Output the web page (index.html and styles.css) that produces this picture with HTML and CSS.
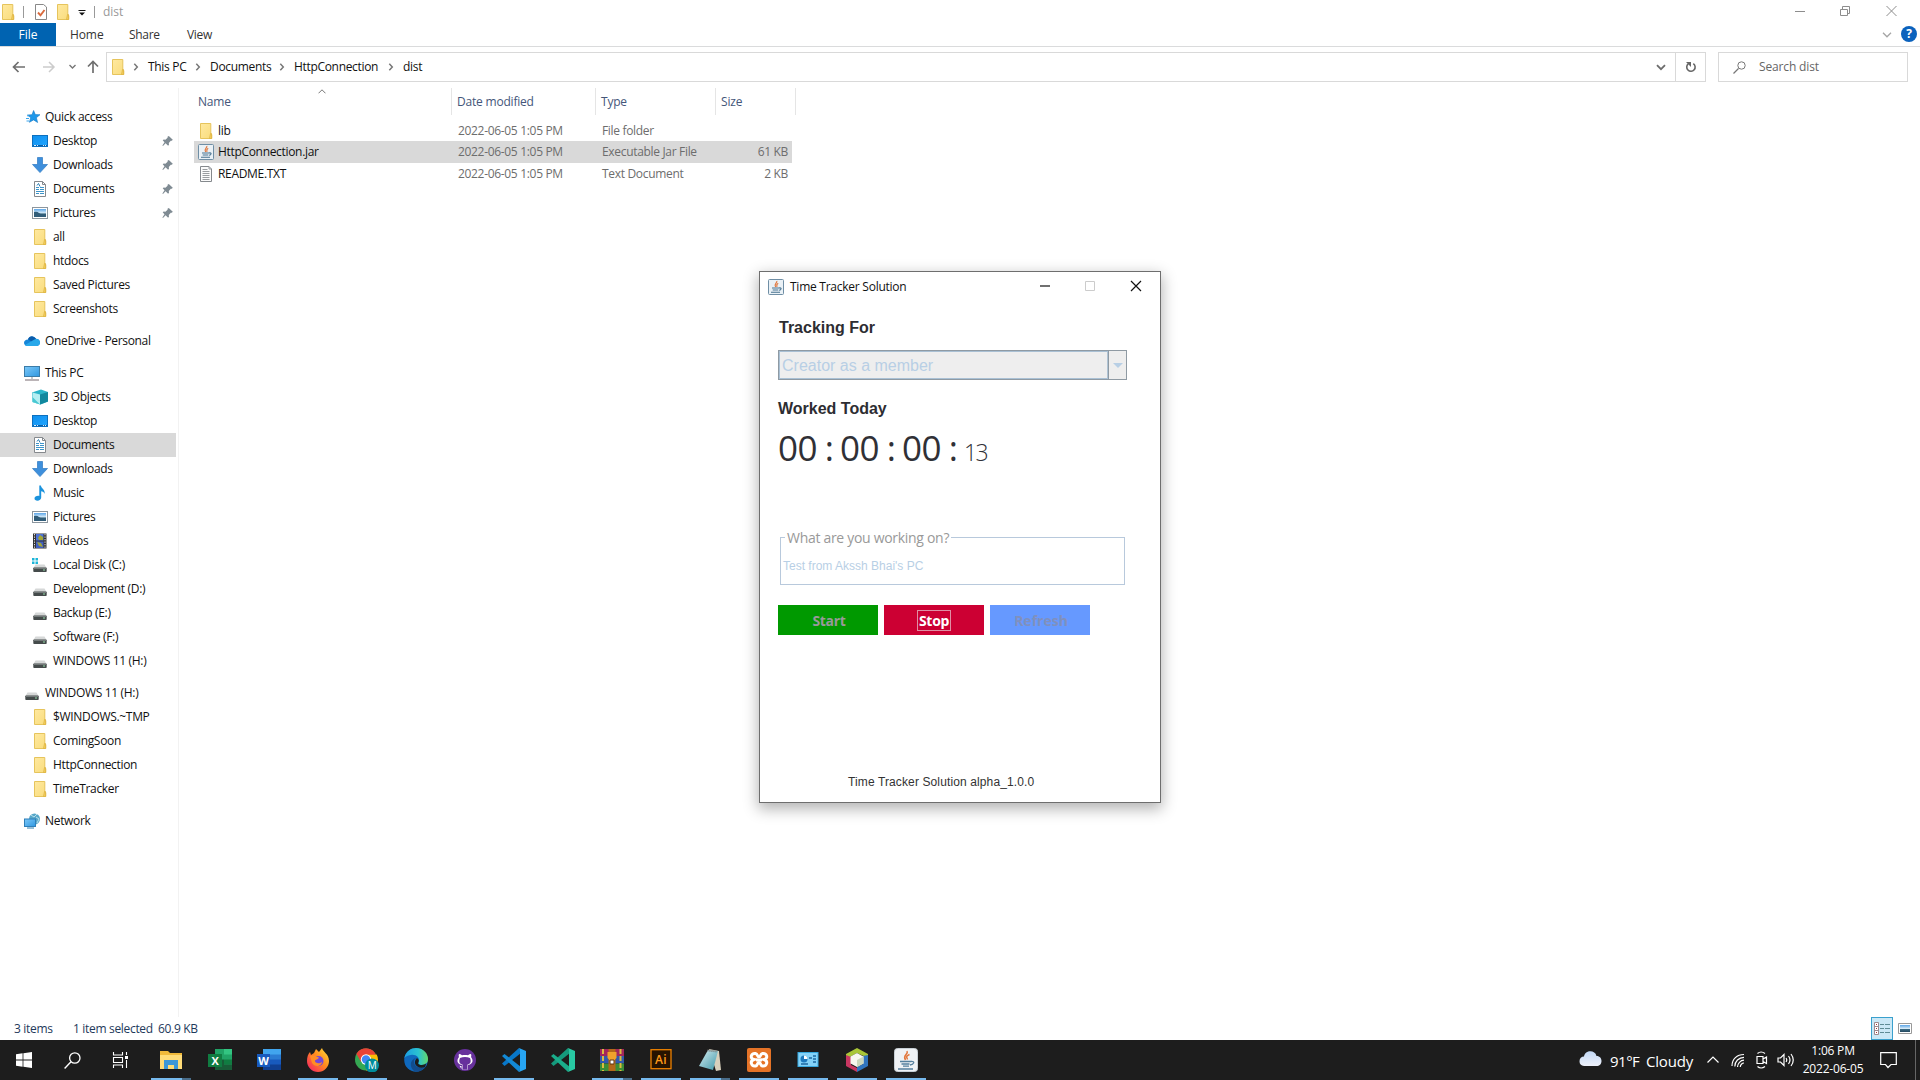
FILE: index.html
```html
<!DOCTYPE html>
<html lang="en">
<head>
<meta charset="utf-8">
<title>dist</title>
<link rel="stylesheet" href="styles.css">
</head>
<body>
<svg class="defs" width="0" height="0" aria-hidden="true">
  <defs>
    <linearGradient id="gFolder" x1="0" y1="0" x2="1" y2="1"><stop offset="0" stop-color="#ffe9a0"/><stop offset="1" stop-color="#f9dc7c"/></linearGradient>
    <linearGradient id="gBlue" x1="0" y1="0" x2="1" y2="1"><stop offset="0" stop-color="#0e8fee"/><stop offset="1" stop-color="#22a6ff"/></linearGradient>
    <linearGradient id="gScreen" x1="0" y1="0" x2="1" y2="1"><stop offset="0" stop-color="#7cc8f8"/><stop offset="1" stop-color="#2f97e0"/></linearGradient>
    <linearGradient id="gCloud" x1="0" y1="0" x2="0" y2="1"><stop offset="0" stop-color="#c3d9f6"/><stop offset="1" stop-color="#eef1fa"/></linearGradient>
    <linearGradient id="gSky" x1="0" y1="0" x2="0" y2="1"><stop offset="0" stop-color="#5ba5e8"/><stop offset=".5" stop-color="#d7ebf8"/><stop offset=".6" stop-color="#3d6c85"/><stop offset="1" stop-color="#24485e"/></linearGradient>
    <linearGradient id="gFox" x1="1" y1="0" x2="0" y2="1"><stop offset="0" stop-color="#ffe23a"/><stop offset=".45" stop-color="#ff8a1e"/><stop offset="1" stop-color="#f5156c"/></linearGradient>
    <linearGradient id="gEdge" x1="0" y1="0" x2="1" y2="0"><stop offset="0" stop-color="#1b9de2"/><stop offset=".6" stop-color="#2bc3d0"/><stop offset="1" stop-color="#63d86a"/></linearGradient>
    <linearGradient id="gNote" x1="0" y1="0" x2="1" y2="1"><stop offset="0" stop-color="#d5eef2"/><stop offset="1" stop-color="#3f97a8"/></linearGradient>
    <symbol id="folder" viewBox="0 0 16 16"><path d="M2.5.5h10.300v11h1v4h-11.300z" fill="url(#gFolder)" stroke="#e6c45c"/><path d="M12.500 10.500h1v5h-2z" fill="#f4cf5f" stroke="#dcb23d" stroke-width=".7"/></symbol>
    <symbol id="star" viewBox="0 0 16 16"><path d="M8.600 1.500l1.700 4.100 4.700.1-3.600 3 1.200 4.800-4-2.600-4.200 2.400 1.300-4.600L2.500 6l4.500-.3z" fill="#1f98ea" stroke="#1479c4" stroke-width=".6"/><path d="M1 9.500h3M1.500 12h2.500M2 6.800h2" stroke="#3aa6ee"/></symbol>
    <symbol id="desktop" viewBox="0 0 16 16"><rect x=".5" y="2.500" width="15" height="11" fill="url(#gBlue)" stroke="#0c70bf"/><path d="M1 12.500h14" stroke="#0b5da6"/><path d="M2 12.500h2m1 0h1m5 0h1m1 0h1" stroke="#d7efff"/></symbol>
    <symbol id="download" viewBox="0 0 16 16"><path d="M5.500.5h5v7h5L8 15.600.500 7.500h5z" fill="#3e8fdc" stroke="#2c79c2" stroke-width=".7"/></symbol>
    <symbol id="document" viewBox="0 0 16 16"><path d="M2.500.5h8l3 3v12h-11z" fill="#fff" stroke="#85898d"/><path d="M10.500.5v3h3" fill="none" stroke="#85898d"/><path d="M4 6.500h3M8 6.500h4M4 8.500h3M8 8.500h4M4 10.500h8M4 12.500h3M8 12.500h4" stroke="#3d94c9"/><path d="M5 4.500l1.500-2 1.500 3" fill="none" stroke="#2d7fb5"/></symbol>
    <symbol id="picture" viewBox="0 0 16 16"><rect x=".5" y="2.500" width="15" height="11" fill="#fff" stroke="#8c969e"/><rect x="2" y="4" width="12" height="8" fill="url(#gSky)"/><path d="M2 7q3-1 5 1t7 1v3H2z" fill="#315d79"/></symbol>
    <symbol id="onedrive" viewBox="0 0 16 16"><path d="M4 6.500C5 3 9.500 2 12 5.800c2.500 0 4 1.700 4 3.700 0 2-1.500 3.500-3.500 3.500H3.500C1.400 13 0 11.600 0 9.800 0 8 1.600 6.500 4 6.500z" fill="#1686d9"/><path d="M4 6.300C5.200 2.600 9.500 2 12 5.800L8 9z" fill="#0a5cab"/><path d="M1 12l9-5.200c3-2 6 .2 6 2.900 0 1.800-1.500 3.300-3.500 3.300H3.500c-1 0-2-.4-2.500-1z" fill="#28a8ea"/></symbol>
    <symbol id="pc" viewBox="0 0 16 16"><rect x=".5" y="1.500" width="15" height="10" fill="url(#gScreen)" stroke="#3b7ca8"/><path d="M7 12h2v2H7z" fill="#c5c9cc"/><path d="M1 15h14" stroke="#8d8287" stroke-width="1.200"/></symbol>
    <symbol id="cube" viewBox="0 0 16 16"><path d="M0 3.500L9 .5l7 2.500v9.500L8.500 15.500.500 13z" fill="#2bb5c9"/><path d="M8 5.500v10L.5 13V3.500z" fill="#b4eef2"/><path d="M.5 8L8 15.500.5 13z" fill="#48c8d2"/><path d="M8 5.500L16 3v9.500l-8 3z" fill="#12889e"/></symbol>
    <symbol id="music" viewBox="0 0 16 16"><path d="M7.300.5h1.600c.2 3 4.600 4 3.700 8.500-.5-1.800-2-2.500-3.400-2.700v6.200c0 1.900-1.700 3.200-3.800 3.200-1.700 0-2.900-.8-2.900-2.200 0-1.900 2.400-3.100 4.800-2.600z" fill="#1b93dd"/></symbol>
    <symbol id="video" viewBox="0 0 16 16"><path d="M1 .5h13.500v15H1z" fill="#333"/><rect x="4" y="1" width="7.500" height="6.500" fill="#4d72d6"/><rect x="4" y="8.500" width="7.500" height="6.500" fill="#4260c4"/><path d="M6 5l2-3 3 2v3H7zM5 9l4 1 2 4-4-1z" fill="#a2a437"/><path d="M2.500 1v14.500M13 1v14.500" stroke="#ddd" stroke-dasharray="1.300 1.200"/></symbol>
    <symbol id="drive" viewBox="0 0 16 16"><path d="M3.500 7.500h9l2 3.500h-13z" fill="#d6d8d8"/><rect x="1.300" y="10.500" width="13.400" height="4.500" rx=".8" fill="#454b4b"/><path d="M2 11.500h12" stroke="#737979"/><circle cx="12" cy="13" r=".8" fill="#9ff0b4"/></symbol>
    <symbol id="cdrive" viewBox="0 0 16 16"><use href="#drive"/><path d="M0 1h2.500v2.500H0zM3.500 1H6v2.500H3.500zM0 4.500h2.500V7H0zM3.500 4.500H6V7H3.500z" fill="#1db5d8"/></symbol>
    <symbol id="network" viewBox="0 0 16 16"><circle cx="10.500" cy="6" r="5.500" fill="#57a7c8"/><path d="M7 2l3 2 3-3M12 4l3 2-2 4" fill="none" stroke="#b8dfec"/><rect x=".5" y="6" width="11" height="7.500" fill="url(#gScreen)" stroke="#2f7fb8"/><path d="M3 15h7" stroke="#3080b0"/></symbol>
    <symbol id="pin" viewBox="0 0 12 12"><path d="M6.800 1l4 3.700-1 1-1 .1-2 2.300.2 1.600-.9 1L3.600 8.200 1 11l-.6-.4L2.500 7.200.7 5.300l1-.8 1.700.2 2.200-2-.1-.9z" fill="#7f8b93"/></symbol>
    <symbol id="java" viewBox="0 0 16 16"><rect x=".5" y=".5" width="15" height="15" rx="1" fill="#eaf1f6" stroke="#6f8ea5"/><path d="M8.800 2C9.500 4 5.500 5 7.600 8M10.200 4.300C8 5.500 8.600 6.300 9 7.800" fill="none" stroke="#e2763b" stroke-width="1.200"/><path d="M4 9h7M4.700 11h5.600M3 13.200h9M11 9c3-.8 2.500 2 0 2.300" fill="none" stroke="#47728f" stroke-width="1.100"/></symbol>
    <symbol id="text" viewBox="0 0 16 16"><path d="M2.500.5h8.500l2.500 2.500v12.500h-11z" fill="#fbfbfb" stroke="#85898d"/><path d="M11 .5V3h2.500M4.500 3.500h5M4.500 5.500h7M4.500 7.500h7M4.500 9.500h7M4.500 11.500h7M4.500 13.500h7" fill="none" stroke="#9a9da0"/></symbol>
    <symbol id="crumb" viewBox="0 0 6 8"><path d="M1.300.8l3 3.200-3 3.200" fill="none" stroke="#777" stroke-width="1.500"/></symbol>
    <symbol id="vs" viewBox="0 0 24 24"><path d="M17 0l7 3v18l-7 3L5.500 13.500 2.200 16.200.300 15V9l1.900-1.200L17 20V4L2.200 16.500.300 15 17 0z" /></symbol>
  </defs>
</svg>

<div class="explorer">
  <header class="titlebar">
    <svg class="i16 q1"><use href="#folder"/></svg><i class="bar b1"></i>
    <svg class="i16 q2" viewBox="0 0 16 16"><path d="M2.500.5h8l3 2.500v12.500h-11z" fill="#fff" stroke="#888"/><path d="M5 8.500l2.500 2.800L11.500 6" fill="none" stroke="#d96a3d" stroke-width="1.900"/></svg>
    <svg class="i16 q3"><use href="#folder"/></svg>
    <svg class="q4" width="8" height="6" viewBox="0 0 8 6"><path d="M.5.500h7" stroke="#111"/><path d="M1 2.500h6L4 5.500z" fill="#111"/></svg>
    <i class="bar b2"></i><span class="title">dist</span>
    <svg class="winctl" width="112" height="12" viewBox="0 0 112 12"><g fill="none" stroke="#8d8d8d"><path d="M1 6.500h10M46.500 4.500h7v6h-7zM48.500 4v-2.500h7v7H54M92.500 1l10 10M102.500 1l-10 10"/></g></svg>
  </header>
  <nav class="tabs">
    <span class="tab file">File</span><span class="tab home">Home</span><span class="tab share">Share</span><span class="tab view">View</span>
    <svg class="collapse" width="10" height="6" viewBox="0 0 10 6"><path d="M1 .8l4 4 4-4" fill="none" stroke="#a5a5a5" stroke-width="1.300"/></svg>
    <span class="help">?</span>
  </nav>
  <div class="addressrow">
    <svg class="arrows" width="88" height="16" viewBox="0 0 88 16"><g fill="none"><path d="M13 8h12M18.500 3l-5 5 5 5" stroke="#6f6f6f" stroke-width="1.700"/><path d="M43 8h11M49 3l5 5-5 5" stroke="#ccc" stroke-width="1.500"/><path d="M69.500 6l3 3 3-3" stroke="#777" stroke-width="1.400"/></g></svg>
    <svg class="up" width="12" height="14" viewBox="0 0 12 14"><path d="M6 13V2M1 6.500L6 1.500l5 5" fill="none" stroke="#6f6f6f" stroke-width="1.700"/></svg>
    <div class="address">
      <svg class="i16 afold"><use href="#folder"/></svg>
      <svg class="chev"><use href="#crumb"/></svg><span class="c1">This PC</span>
      <svg class="chev"><use href="#crumb"/></svg><span class="c2">Documents</span>
      <svg class="chev"><use href="#crumb"/></svg><span class="c3">HttpConnection</span>
      <svg class="chev"><use href="#crumb"/></svg><span class="c4">dist</span>
      <svg class="drop" width="10" height="7" viewBox="0 0 10 7"><path d="M1 1.200l4 4 4-4" fill="none" stroke="#6d6d6d" stroke-width="1.800"/></svg>
      <span class="refresh"><svg width="12" height="13" viewBox="0 0 12 13"><path d="M8.300 2.600a4.200 4.200 0 1 1-5 .2" fill="none" stroke="#666" stroke-width="1.600"/><path d="M1 1h5v5z" fill="#666"/></svg></span>
    </div>
    <div class="search"><svg width="13" height="13" viewBox="0 0 13 13"><path d="M.500 12.500l5-5" stroke="#777" stroke-width="1.200"/><circle cx="8.500" cy="4.500" r="3.700" fill="none" stroke="#777"/></svg><span>Search dist</span></div>
  </div>
  <div class="body">
    <aside class="tree">
      <div class="n root star"><svg class="i16"><use href="#star"/></svg><span>Quick access</span></div>
      <div class="n"><svg class="i16"><use href="#desktop"/></svg><span>Desktop</span><svg class="pin"><use href="#pin"/></svg></div>
      <div class="n"><svg class="i16"><use href="#download"/></svg><span>Downloads</span><svg class="pin"><use href="#pin"/></svg></div>
      <div class="n"><svg class="i16"><use href="#document"/></svg><span>Documents</span><svg class="pin"><use href="#pin"/></svg></div>
      <div class="n"><svg class="i16"><use href="#picture"/></svg><span>Pictures</span><svg class="pin"><use href="#pin"/></svg></div>
      <div class="n"><svg class="i16"><use href="#folder"/></svg><span>all</span></div>
      <div class="n"><svg class="i16"><use href="#folder"/></svg><span>htdocs</span></div>
      <div class="n"><svg class="i16"><use href="#folder"/></svg><span>Saved Pictures</span></div>
      <div class="n"><svg class="i16"><use href="#folder"/></svg><span>Screenshots</span></div>
      <div class="n root"><svg class="i16"><use href="#onedrive"/></svg><span>OneDrive - Personal</span></div>
      <div class="n root"><svg class="i16"><use href="#pc"/></svg><span>This PC</span></div>
      <div class="n"><svg class="i16"><use href="#cube"/></svg><span>3D Objects</span></div>
      <div class="n"><svg class="i16"><use href="#desktop"/></svg><span>Desktop</span></div>
      <div class="n selected"><svg class="i16"><use href="#document"/></svg><span>Documents</span></div>
      <div class="n"><svg class="i16"><use href="#download"/></svg><span>Downloads</span></div>
      <div class="n"><svg class="i16"><use href="#music"/></svg><span>Music</span></div>
      <div class="n"><svg class="i16"><use href="#picture"/></svg><span>Pictures</span></div>
      <div class="n"><svg class="i16"><use href="#video"/></svg><span>Videos</span></div>
      <div class="n"><svg class="i16"><use href="#cdrive"/></svg><span>Local Disk (C:)</span></div>
      <div class="n"><svg class="i16"><use href="#drive"/></svg><span>Development (D:)</span></div>
      <div class="n"><svg class="i16"><use href="#drive"/></svg><span>Backup (E:)</span></div>
      <div class="n"><svg class="i16"><use href="#drive"/></svg><span>Software (F:)</span></div>
      <div class="n"><svg class="i16"><use href="#drive"/></svg><span>WINDOWS 11 (H:)</span></div>
      <div class="n root"><svg class="i16"><use href="#drive"/></svg><span>WINDOWS 11 (H:)</span></div>
      <div class="n"><svg class="i16"><use href="#folder"/></svg><span>$WINDOWS.~TMP</span></div>
      <div class="n"><svg class="i16"><use href="#folder"/></svg><span>ComingSoon</span></div>
      <div class="n"><svg class="i16"><use href="#folder"/></svg><span>HttpConnection</span></div>
      <div class="n"><svg class="i16"><use href="#folder"/></svg><span>TimeTracker</span></div>
      <div class="n root"><svg class="i16"><use href="#network"/></svg><span>Network</span></div>
    </aside>
    <main class="list">
      <div class="head">
        <span>Name<svg class="sort" width="8" height="5" viewBox="0 0 8 5"><path d="M.500 4.300L4 .8l3.500 3.500" fill="none" stroke="#777"/></svg></span><span>Date modified</span><span>Type</span><span>Size</span>
      </div>
      <div class="row"><span class="name"><svg class="i16"><use href="#folder"/></svg>lib</span><span>2022-06-05 1:05 PM</span><span>File folder</span><span class="size"></span></div>
      <div class="row on"><span class="name"><svg class="i16"><use href="#java"/></svg>HttpConnection.jar</span><span>2022-06-05 1:05 PM</span><span>Executable Jar File</span><span class="size">61 KB</span></div>
      <div class="row"><span class="name"><svg class="i16"><use href="#text"/></svg>README.TXT</span><span>2022-06-05 1:05 PM</span><span>Text Document</span><span class="size">2 KB</span></div>
    </main>
  </div>
  <footer class="status">
    <span class="s1">3 items</span><span class="s2">1 item selected</span><span class="s3">60.9 KB</span>
    <div class="views">
      <span class="details"><svg width="16" height="14" viewBox="0 0 16 14"><path d="M.5.500h4v12h-4zM.500 4.500h4M.500 8.500h4" fill="#fff" stroke="#9c8a90"/><path d="M6 2.500h4m1 0h5M6 6.500h4m1 0h5M6 10.500h4m1 0h5" stroke="#5f8c96"/><path d="M2 2.500h1M2 6.500h1M2 10.500h1" stroke="#a33"/></svg></span>
      <svg width="14" height="11" viewBox="0 0 14 11"><path d="M.5.500h13v10H.500z" fill="#fff" stroke="#999"/><path d="M2 2h10v7H2z" fill="url(#gSky)"/></svg>
    </div>
  </footer>
</div>

<section class="dialog">
  <header class="dtitle"><svg class="i16"><use href="#java"/></svg><span>Time Tracker Solution</span>
    <svg class="dctl" width="104" height="12" viewBox="0 0 104 12"><g fill="none"><path d="M1 6h10" stroke="#111" stroke-width="1.200"/><path d="M46.500 1.500h9v9h-9z" stroke="#ccc"/><path d="M92 1l10 10M102 1L92 11" stroke="#111" stroke-width="1.200"/></g></svg>
  </header>
  <h2 class="h1">Tracking For</h2>
  <div class="combo"><span class="value">Creator as a member</span><span class="arrow"></span></div>
  <h2 class="h2">Worked Today</h2>
  <div class="timer"><span>00</span><b>:</b><span>00</span><b>:</b><span>00</span><b>:</b><em>13</em></div>
  <fieldset class="task"><legend>What are you working on?</legend><span>Test from Akssh Bhai's PC</span></fieldset>
  <div class="buttons"><span class="btn start">Start</span><span class="btn stop"><span class="focus">Stop</span></span><span class="btn refreshbtn">Refresh</span></div>
  <p class="version">Time Tracker Solution alpha_1.0.0</p>
</section>

<footer class="taskbar">
  <span class="t"><svg width="16" height="16" viewBox="0 0 16 16"><path d="M0 2.200L6.600 1.300v6.300H0zM7.400 1.200L16 0v7.600H7.400zM0 8.400h6.600v6.300L0 13.800zM7.400 8.400H16V16l-8.600-1.200z" fill="#fff"/></svg></span>
  <span class="t"><svg width="17" height="17" viewBox="0 0 17 17"><circle cx="10.800" cy="6" r="5.200" fill="none" stroke="#fff" stroke-width="1.300"/><path d="M.600 16.400L7 9.800" stroke="#fff" stroke-width="1.400"/></svg></span>
  <span class="t"><svg width="17" height="16" viewBox="0 0 17 16"><path d="M1.500 0v3h9V0M1.500 16v-3h9v3M1.500 5.500h9v5h-9zM14.500 0v3M14.500 8v8" fill="none" stroke="#fff" stroke-width="1.100"/><path d="M13 4h3v3h-3z" fill="#fff"/></svg></span>
  <span class="t app open multi"><svg width="24" height="24" viewBox="0 0 24 24"><path d="M1 3h8l2 2h12v15H1z" fill="#f0b93a"/><path d="M1 7h22v14H1z" fill="#ffdc78"/><path d="M5 12h14v9h-4v-4H9v4H5z" fill="#3d97d7"/></svg></span>
  <span class="t app"><svg width="24" height="24" viewBox="0 0 24 24"><path d="M7 1h17v21H7z" fill="#21a366"/><path d="M16 1h8v5.500h-8z" fill="#33c481"/><path d="M7 11.500h9v10.500H7z" fill="#185c37"/><path d="M16 11.500h8v5h-8z" fill="#107c41"/><path d="M16 16.500h8V22h-8z" fill="#185c37"/><path d="M0 6h14v13H0z" fill="#107c41"/><text x="7" y="16.500" text-anchor="middle" class="lettr">X</text></svg></span>
  <span class="t app"><svg width="24" height="24" viewBox="0 0 24 24"><path d="M6 1h18v6H6z" fill="#41a5ee"/><path d="M6 6.500h18V12H6z" fill="#2b7cd3"/><path d="M6 11.500h18V17H6z" fill="#185abd"/><path d="M6 16.500h18V22H6z" fill="#103f91"/><path d="M0 6h13v13H0z" fill="#185abd"/><text x="6.500" y="16.500" text-anchor="middle" class="lettr">W</text></svg></span>
  <span class="t app open"><svg width="24" height="24" viewBox="0 0 24 24"><path d="M4 4l1 3 3-2 2-4 3 3 3-4c1 4 7 6 7 13a11 11 0 0 1-22 0c0-4 1-7 3-9z" fill="url(#gFox)"/><circle cx="12.500" cy="13" r="5" fill="#7147d8"/><path d="M4 8c4-2 6 1 9 1.500-1 2.500-4 1.500-4 3.500s4 3.500 7 1c0 4-7 6-10 1z" fill="#ff8d24"/></svg></span>
  <span class="t app open"><svg width="24" height="24" viewBox="0 0 24 24"><circle cx="11" cy="11.500" r="11" fill="#35a853"/><path d="M1.500 6A11 11 0 0 1 20.500 6L11 12z" fill="#e94235"/><path d="M11 6.500h10.700A11 11 0 0 1 11 22.500l5-8z" fill="#fbbc05"/><path d="M1.500 6L6 14l5-7.500h9.800A11 11 0 0 0 1.500 6z" fill="#e94235"/><circle cx="11" cy="11.500" r="5.200" fill="#fff"/><circle cx="11" cy="11.500" r="4.200" fill="#4285f4"/><circle cx="17" cy="17.500" r="7" fill="#008c9b"/><text x="17" y="21" text-anchor="middle" class="mlet">M</text></svg></span>
  <span class="t app"><svg width="24" height="24" viewBox="0 0 24 24"><circle cx="12" cy="12" r="11.800" fill="#0f68bd"/><path d="M.300 10C2 3 7 0 12 0c8 0 12 6 12 11 0 4-3 6-6.500 6-2.500 0-4-1-3-2.500C17 10 12 6.500 8 6.800 4 7 1.500 9 .300 10z" fill="url(#gEdge)"/><path d="M13 9.500c-3 1-4 4.500-2 7.500 2 2.800 7 3.800 10.500 1.500-2 3.500-6 5.300-9.500 5.300-6-2-8-12 1-14.300z" fill="#124c8d"/><path d="M14.500 14c-1 2 .5 3 3 3 2 0 3.500-.5 4.800-1.700L21 19c-4 2-9 0-10-3.500-.5-2 .5-4 2-5.500 1 1 2.500 2 1.500 4z" fill="#1d1d1d"/></svg></span>
  <span class="t app"><svg width="24" height="24" viewBox="0 0 24 24"><circle cx="12" cy="12" r="11" fill="#67319c"/><path d="M8.500 21v-3c-2 .3-2.500-1-3-1.800M9 21.500V17c-6-1-5-6-3-8-.5-1-.3-2 0-3 1 0 2 .5 3 1.300 2-.5 4-.5 6 0 1-.8 2-1.300 3-1.300.3 1 .5 2 0 3 2 2 3 7-3 8v4.500z" fill="#fff"/><path d="M9.500 21.500v-5c-3-.5-4-3-2.500-6.500 3-1.500 7-1.500 10 0 1.500 3.500.5 6-2.500 6.500v5z" fill="#67319c"/></svg></span>
  <span class="t app open"><svg width="24" height="24" viewBox="0 0 24 24"><path d="M17 0L0 15.500 2.500 18 19 5z" fill="#0877c9"/><path d="M0 8l2.500-2L19 19l-2 5z" fill="#1389d5"/><path d="M17 0l7 3v18l-7 3 1-3V3z" fill="#27a5f3"/></svg></span>
  <span class="t app"><svg width="24" height="24" viewBox="0 0 24 24"><path d="M17 0L0 15.500 2.500 18 19 5z" fill="#159a7d"/><path d="M0 8l2.500-2L19 19l-2 5z" fill="#1aad8b"/><path d="M17 0l7 3v18l-7 3 1-3V3z" fill="#28c9a3"/></svg></span>
  <span class="t app open multi"><svg width="24" height="24" viewBox="0 0 24 24"><path d="M0 1h24v7H0z" fill="#a3265b"/><path d="M0 8h24v7.500H0z" fill="#3158ad"/><path d="M0 15.500h24V23H0z" fill="#3c8d36"/><path d="M3 1v22M20.500 1v22" stroke="#dabb40" stroke-width="2" stroke-dasharray="5 2"/><path d="M8.500 1h7v22h-7z" fill="#b56719"/><path d="M7.500 4h9v6l-2 2v4h-5v-4l-2-2z" fill="#f0a12c"/><path d="M10 12h4v4h-4z" fill="#fff" stroke="#5e3513"/></svg></span>
  <span class="t app open"><svg width="24" height="24" viewBox="0 0 24 24"><rect x="2" y="1.700" width="20" height="19" fill="#261300" stroke="#ef8200" stroke-width="1.300"/><text x="12" y="16" text-anchor="middle" class="ai">Ai</text></svg></span>
  <span class="t app open multi"><svg width="24" height="24" viewBox="0 0 24 24"><path d="M11 1l10 2 2 19-5 1z" fill="#d8d0bc"/><path d="M10 2l10 1-5 19-14-4z" fill="url(#gNote)"/><path d="M9.500 2.500l10 1" stroke="#777" stroke-width="2" stroke-dasharray="1 1"/></svg></span>
  <span class="t app open"><svg width="24" height="24" viewBox="0 0 24 24"><rect width="24" height="24" rx="2" fill="#e57327"/><path d="M8.500 5.500C4 5 2.500 10.500 7 11.500 2.500 13 4 18.500 8.500 18c2.500-.5 1.500-3.500 3.500-3.500s1 3 3.500 3.500c4.500.5 6-5 1.500-6.500 4.500-1 3-6.500-1.500-6C13 6 14 9 12 9s-1-3-3.500-3.500z" fill="none" stroke="#fff" stroke-width="3"/><path d="M9 12h6" stroke="#fff" stroke-width="3"/></svg></span>
  <span class="t app open"><svg width="24" height="24" viewBox="0 0 24 24"><rect x="2" y="4.500" width="20" height="14" fill="#83d2f8" stroke="#36a8df"/><circle cx="8" cy="11" r="3.500" fill="#1c79bd"/><path d="M8 11V7.500A3.500 3.500 0 0 1 11.500 11z" fill="#fff"/><path d="M13 10h3m1-2h3m-3 3h3m-3 3h3m-15 2h7" stroke="#1d68a0" stroke-width="1.500"/></svg></span>
  <span class="t app open"><svg width="24" height="24" viewBox="0 0 24 24"><path d="M12 0l11 6v4L12 5 3 10v8L1 17V6z" fill="#a9c637"/><path d="M1 7l5 2v8l6 3v4L1 18z" fill="#c83661"/><path d="M23 7v11l-11 6v-5l6-3V8z" fill="#2f74bd"/><path d="M12 5l6.500 3.500v7L12 19l-6.500-3.500v-7z" fill="#f7f7ef"/><path d="M12 12l6.500-3.500v7L12 19z" fill="#cbd7bc"/></svg></span>
  <span class="t app open"><svg width="24" height="24" viewBox="0 0 24 24"><rect x=".5" y=".5" width="23" height="23" rx="3" fill="#eff2f5" stroke="#c8d0d6"/><path d="M13 3c2 3.500-5 4-1.500 9M15.500 6.500C11 8.500 13 9.500 13.500 11.500" fill="none" stroke="#e2763b" stroke-width="1.500"/><path d="M6 13.500h11M7.500 16h8M9 18.200h6M4 21h15M17 13.500c4.500-.5 3 3-1 3.500" fill="none" stroke="#55809e" stroke-width="1.300"/></svg></span>
  <div class="tray">
    <svg class="cloud" width="23" height="16" viewBox="0 0 23 16"><path d="M5 5.500C6-1 16-1.500 17.500 5 21 5 22.500 7.500 22.500 10c0 3-2 5-5 5H5C2 15 .500 13 .500 10.300.500 7.500 2.500 5.500 5 5.500z" fill="url(#gCloud)"/></svg>
    <span class="temp">91°F</span><span class="sky">Cloudy</span>
    <svg class="trayicons" width="90" height="22" viewBox="0 0 90 22"><g fill="none" stroke="#fff" stroke-width="1.200"><path d="M1.500 13.500L7 8l5.500 5.500"/><path d="M26 17C26 10 31 5.500 38 5.500M28.800 17.500c0-5 4-9.200 9.200-9.200M31.500 18c0-3.500 3-6.800 6.500-6.800M34.300 18c0-2 1.700-4 3.700-4"/><path d="M51 7.500h6v7h-6zM57 10l3.500-2v6.500L57 12.500M51.500 4.500q3.500-3 7.500 0M51.500 17.500q3.500 3 7.500 0"/><path d="M72 9h2.500L78 5.500v11L74.500 13H72zM80 9q1.500 2 0 4M82.500 7q3 4 0 8M85 5q4.500 6 0 12"/></g></svg>
    <span class="clock"><span>1:06 PM</span><span>2022-06-05</span></span>
    <svg class="note" width="17" height="17" viewBox="0 0 17 17"><path d="M.700.700h15.600v11.800H11L8 15.500l-2.500-3H.700z" fill="none" stroke="#fff" stroke-width="1.200"/></svg>
    <i class="peek"></i>
  </div>
</footer>
</body>
</html>
```
FILE: styles.css
```css
* { box-sizing: border-box; }
body { margin: 0; width: 1920px; height: 1080px; overflow: hidden; position: relative; display: flex; flex-direction: column; background: #fff; color: #111; font: 12px/16px "Open Sans", "Noto Sans", sans-serif; letter-spacing: -.32px; }
span { white-space: nowrap; }
svg { display: block; flex: none; }
.defs { position: absolute; }
.i16 { width: 16px; height: 16px; }
.explorer { height: 1040px; display: flex; flex-direction: column; }

.titlebar { height: 23px; display: flex; align-items: center; }
.q1 { margin-left: 0; }
.bar { width: 1px; height: 12px; background: #999; }
.b1 { margin-left: 7px; }
.q2 { margin-left: 9px; }
.q3 { margin-left: 6px; }
.q4 { margin: 3px 0 0 7px; }
.b2 { margin-left: 8px; }
.title { margin-left: 8px; color: #999; letter-spacing: 0; }
.winctl { margin: -2px 14px 0 auto; }

.tabs { height: 24px; border-bottom: 1px solid #dadbdc; display: flex; color: #333; }
.tab { height: 23px; line-height: 23px; }
.file { width: 56px; background: #0063b1; color: #fff; text-align: center; letter-spacing: 0; }
.home { margin-left: 14px; width: 59px; letter-spacing: -.1px; }
.share { width: 58px; }
.view { width: 50px; }
.collapse { margin: 9px 9px 0 auto; }
.help { width: 16px; height: 16px; margin: 3px 3px 0 0; border-radius: 50%; background: #0b62bd; color: #fff; font-weight: 700; text-align: center; }

.addressrow { height: 41px; display: flex; align-items: flex-start; padding-top: 5px; }
.arrows { margin-top: 7px; }
.up { margin-top: 8px; margin-right: 6px; margin-left: -1px; }
.address { width: 1600px; margin-left: 1px; height: 30px; border: 1px solid #d9d9d9; display: flex; align-items: center; }
.afold { margin: -1px 7px 0 3px; }
.address .chev { width: 6px; height: 8px; margin-right: 9px; }
.c1 { width: 47px; }
.c2 { width: 69px; }
.c3 { width: 94px; }
.address .c1, .address .c2, .address .c3 { margin-right: 0; }
.drop { margin-left: auto; margin-right: 9px; }
.refresh { width: 30px; height: 28px; border-left: 1px solid #d9d9d9; display: flex; align-items: center; justify-content: center; }
.search { width: 190px; height: 30px; margin-left: 12px; border: 1px solid #d9d9d9; display: flex; align-items: center; color: #666; padding-left: 14px; gap: 13px; letter-spacing: -.15px; }

.body { flex: 1; display: flex; min-height: 0; }
.tree { width: 179px; border-right: 1px solid #f2f2f2; padding-top: 17px; }
.n { height: 24px; width: 176px; padding-left: 32px; display: flex; align-items: center; gap: 5px; }
.n.root { padding-left: 24px; margin-top: 8px; }
.n.star { margin-top: 0; gap: 4px; padding-left: 25px; }
.n.selected { background: #d9d9d9; }
.pin { width: 12px; height: 12px; margin: 0 2px 0 auto; }
.list { width: 617px; padding-left: 15px; }
.head { height: 32px; display: grid; grid-template-columns: 258px 144px 120px 80px; color: #44567a; }
.head span { position: relative; height: 27px; padding: 6px 0 0 6px; border-right: 1px solid #e5e5e5; line-height: 16px; margin-left: -1px; letter-spacing: -.2px; }
.head span:first-child { padding-left: 4px; margin-left: 0; }
.sort { position: absolute; left: 124px; top: 1px; }
.row { width: 598px; height: 21px; display: grid; grid-template-columns: 257px 144px 120px 77px; align-items: center; color: #6d6d6d; padding-left: 0; line-height: 20px; }
.row > span { padding-left: 7px; }
.row.on { height: 22px; background: #d9d9d9; }
.row .name { display: flex; align-items: center; gap: 4px; padding-left: 4px; color: #111; }
.row .size { text-align: right; padding-right: 4px; }

.status { height: 23px; display: flex; align-items: center; color: #1e395b; }
.s1 { margin-left: 14px; width: 59px; }
.s2 { width: 85px; }
.views { margin-left: auto; display: flex; align-items: center; gap: 5px; margin-right: 8px; }
.details { width: 22px; height: 23px; border: 1px solid #3aa0cd; background: #cbe8f6; display: flex; align-items: center; justify-content: center; }

.dialog { position: absolute; left: 759px; top: 271px; width: 402px; height: 532px; border: 1px solid #6e6e6e; background: #fff; box-shadow: 0 5px 14px 1px rgba(0,0,0,.3); display: flex; flex-direction: column; color: #333; }
.dtitle { height: 30px; display: flex; align-items: center; padding-left: 8px; gap: 6px; color: #111; letter-spacing: -.25px; }
.dctl { margin: -2px 17px 0 auto; }
h2 { font: bold 16px/20px "Liberation Sans", Arial, sans-serif; letter-spacing: 0; margin: 0; color: #2d2d32; }
.h1 { margin: 16px 0 0 19px; }
.combo { margin: 12px 0 0 18px; width: 349px; height: 30px; display: flex; font: 16px/27px "Liberation Sans", Arial, sans-serif; letter-spacing: 0; color: #b8cfe5; background: #eee; border: 1px solid #8f9aa3; }
.value { width: 329px; border: 1px solid #a9c0d4; border-right-color: #b0c4d5; padding-left: 2px; }
.arrow { flex: 1; border-left: 1px solid #8f9aa3; display: flex; align-items: center; justify-content: center; }
.arrow::before { content: ""; border: 5px solid transparent; border-top: 5px solid #b8cfe5; border-bottom: 0; }
.h2 { margin: 19px 0 0 18px; }
.timer { height: 50px; margin-left: 18px; display: flex; align-items: baseline; font-size: 35px; line-height: 58px; color: #303036; letter-spacing: -.6px; }
.timer span { width: 40px; }
.timer b { width: 22px; text-align: center; font-weight: 400; }
.timer em { font-style: normal; font-weight: 300; font-size: 23px; letter-spacing: -1.700px; }
.task { margin: 60px 0 0 20px; width: 345px; height: 56px; border: 1px solid #b8c9dc; padding: 12px 0 0 2px; color: #b8cfe5; font: 12px/16px "Liberation Sans", Arial, sans-serif; letter-spacing: 0; }
.task legend { margin-left: 2px; padding: 0 2px; height: 17px; font: 14px/17px "Open Sans", sans-serif; letter-spacing: -.3px; color: #999; }
.task span { display: block; }
.buttons { display: flex; gap: 6px; margin: 20px 0 0 18px; }
.btn { width: 100px; height: 30px; display: flex; align-items: center; justify-content: center; font: bold 14px/20px "Open Sans", sans-serif; letter-spacing: -.3px; padding-left: 2px; padding-top: 2px; }
.start { background: #090; color: #999; }
.stop { background: #c03; color: #fff; padding-left: 0; padding-top: 0; }
.focus { width: 34px; height: 21px; border: 1px solid #df8fa4; text-align: center; }
.refreshbtn { background: #69f; color: #8090bd; letter-spacing: 0; }
.version { margin: auto 0 12px 88px; font: 12px/16px "Liberation Sans", Arial, sans-serif; letter-spacing: .12px; color: #333; }

.taskbar { height: 40px; background: #1d1d1d; display: flex; color: #fff; }
.t { width: 48px; height: 40px; display: flex; align-items: center; justify-content: center; }
.app { width: 40px; margin-right: 9px; border-bottom: 2px solid transparent; padding-top: 2px; }
.t:nth-child(3) { margin-right: 7px; }
.open { border-bottom-color: #76b9ed; }
.multi { border-bottom-color: transparent; background: linear-gradient(90deg, #76b9ed 31px, #496d8a 31px) bottom / 100% 2px no-repeat border-box; }
.lettr { font: bold 11px "Open Sans", sans-serif; fill: #fff; }
.mlet { font: 10px "Open Sans", sans-serif; fill: #fff; }
.ai { font: 600 12px "Open Sans", sans-serif; fill: #ff9a1a; letter-spacing: .3px; }
.tray { margin-left: auto; width: 341px; display: flex; align-items: center; font-size: 15px; letter-spacing: -.5px; }
.cloud { margin-top: -2px; }
.temp { margin: 2px 0 0 8px; width: 36px; }
.sky { margin-top: 2px; width: 59px; letter-spacing: -.2px; }
.trayicons { margin-left: 1px; }
.clock { width: 70px; margin-left: 2px; display: flex; flex-direction: column; align-items: center; font-size: 12px; line-height: 18px; letter-spacing: -.2px; }
.note { margin-left: 12px; }
.peek { width: 1px; height: 40px; background: #666; margin-left: auto; margin-right: 4px; }
```
